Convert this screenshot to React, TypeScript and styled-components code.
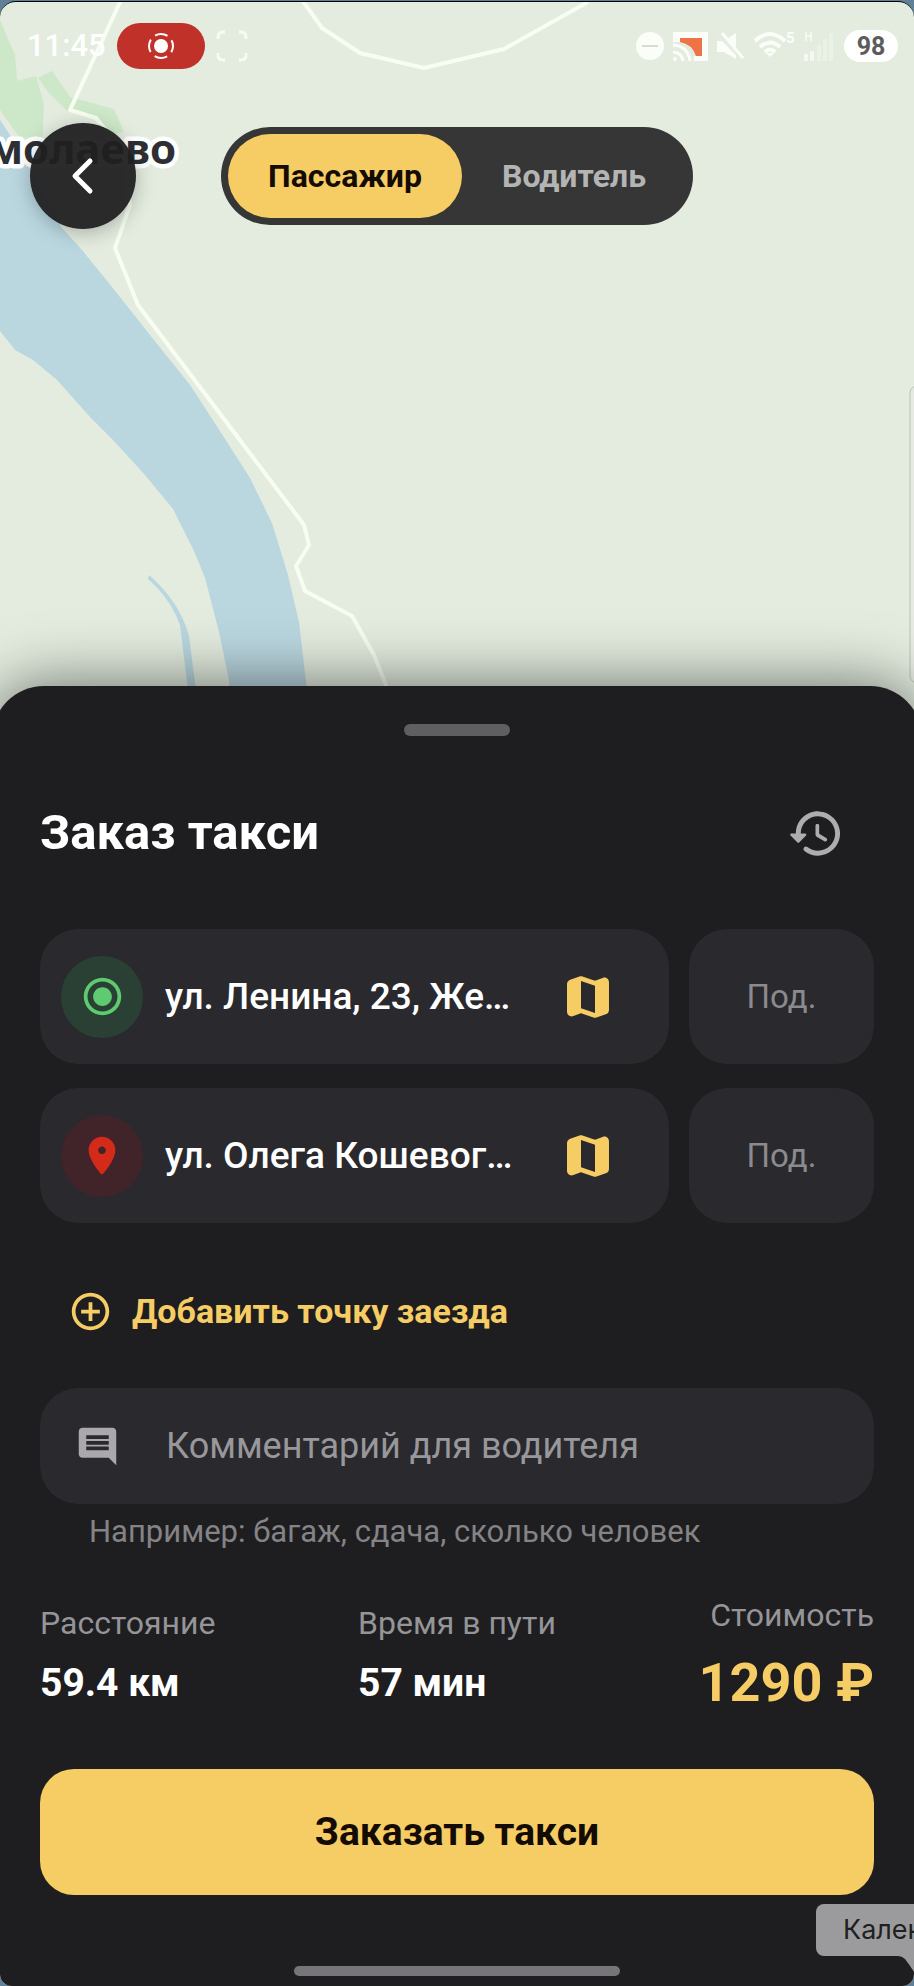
import React from "react";
import styled, { createGlobalStyle } from "styled-components";
import {
  MdAddCircleOutline,
  MdComment,
  MdRadioButtonChecked,
} from "react-icons/md";

const color = {
  sheet: "#1e1e20",
  card: "#2a292d",
  accent: "#f6cc65",
  text: "#ffffff",
  muted: "#959498",
  land: "#e3ecdf",
  water: "#bad7e0",
  wood: "#cde8c8",
  road: "#f8fdf1",
};

const GlobalStyle = createGlobalStyle`
  *, *::before, *::after { box-sizing: border-box; }
  body {
    margin: 0;
    background: #5f8096;
    font-family: Roboto, "Liberation Sans", sans-serif;
  }
  button, input { font: inherit; color: inherit; border: 0; background: none; padding: 0; margin: 0; }
  button { cursor: pointer; }
  h1, p, dl, dt, dd { margin: 0; font-weight: inherit; }
`;

const Page = styled.div`
  padding-top: 1px;
  overflow: hidden;
`;

const Screen = styled.main`
  position: relative;
  overflow: hidden;
  border-top: 1px solid #000;
  border-radius: 16px 16px 12px 12px;
  background: ${color.land};
`;

const MapArea = styled.section`
  position: relative;
  height: 684px;
`;

const MapDrawing = styled.svg`
  position: absolute;
  top: 0;
  left: 0;
  width: 100%;
  height: 740px;
  display: block;
`;

const StatusBar = styled.div`
  position: relative;
  display: flex;
  align-items: center;
  justify-content: space-between;
  height: 88px;
  padding: 0 16px 0 27px;
`;

const StatusGroup = styled.div<{ $gap: number }>`
  display: flex;
  align-items: center;
  gap: ${(p) => p.$gap}px;
`;

const Clock = styled.time`
  font-size: 31px;
  font-weight: 500;
  line-height: 40px;
  color: ${color.text};
`;

const RecordPill = styled.div`
  display: flex;
  align-items: center;
  justify-content: center;
  width: 88px;
  height: 46px;
  border-radius: 23px;
  background: #c0312a;
`;

const Battery = styled.div`
  display: flex;
  align-items: center;
  justify-content: center;
  width: 54px;
  height: 32px;
  border-radius: 16px;
  background: #fff;
  color: #5b5c5b;
  font-size: 25px;
  font-weight: 700;
`;

const TopControls = styled.header`
  position: relative;
  display: grid;
  grid-template-columns: 1fr auto 1fr;
  align-items: center;
  padding: 33px 30px 0;
`;

const BackButton = styled.button`
  display: flex;
  align-items: center;
  justify-content: center;
  width: 106px;
  height: 106px;
  border-radius: 50%;
  background: rgba(32, 32, 33, 0.95);
  box-shadow: 0 4px 20px rgba(0, 0, 0, 0.25);
`;

const ModeSwitch = styled.div`
  display: grid;
  grid-template-columns: 234px 224px;
  height: 98px;
  padding: 7px;
  border-radius: 50px;
  background: #363637;
`;

const ModeButton = styled.button<{ $active?: boolean }>`
  border-radius: 43px;
  font-size: 32px;
  font-weight: 700;
  color: ${(p) => (p.$active ? "#140c04" : "#b4b4b4")};
  background: ${(p) => (p.$active ? color.accent : "transparent")};
`;

const Sheet = styled.section`
  position: relative;
  margin: 0 -8px;
  padding: 38px 48px 10px;
  border-radius: 52px 52px 0 0;
  background: ${color.sheet};
  color: ${color.text};
  box-shadow: 0 0 64px rgba(0, 0, 0, 0.56);
`;

const Bar = styled.div<{ $width: number; $height: number; $tone: string }>`
  width: ${(p) => p.$width}px;
  height: ${(p) => p.$height}px;
  margin: 0 auto;
  border-radius: 6px;
  background: ${(p) => p.$tone};
`;

const TitleRow = styled.div`
  display: flex;
  align-items: center;
  justify-content: space-between;
  height: 60px;
  margin-top: 67px;
  padding-right: 29px;
`;

const Title = styled.h1`
  font-size: 49px;
  font-weight: 700;
  line-height: 60px;
`;

const IconButton = styled.button<{ $tone: string }>`
  display: flex;
  flex: none;
  color: ${(p) => p.$tone};
`;

const Stops = styled.div`
  display: flex;
  flex-direction: column;
  gap: 24px;
  margin-top: 66px;
`;

const StopRow = styled.div`
  display: flex;
  gap: 20px;
`;

const AddressCard = styled.div`
  display: flex;
  flex: 1;
  align-items: center;
  min-width: 0;
  height: 135px;
  padding: 0 53px 0 21px;
  border-radius: 38px;
  background: ${color.card};
`;

const StopBadge = styled.span<{ $tone: string; $fill: string }>`
  display: flex;
  flex: none;
  align-items: center;
  justify-content: center;
  width: 82px;
  height: 82px;
  border-radius: 50%;
  color: ${(p) => p.$tone};
  background: ${(p) => p.$fill};
`;

const AddressInput = styled.input`
  flex: 1;
  min-width: 0;
  height: 60px;
  margin: 0 20px 0 22px;
  font-size: 37px;
  font-weight: 500;
  text-overflow: ellipsis;
  outline: none;
`;

const EntranceInput = styled.input`
  width: 185px;
  height: 135px;
  border-radius: 38px;
  background: ${color.card};
  font-size: 33px;
  text-align: center;
  outline: none;
  &::placeholder { color: #8b8a8f; opacity: 1; }
`;

const AddStop = styled.button`
  display: flex;
  align-items: center;
  gap: 19px;
  height: 60px;
  margin-top: 58px;
  padding-left: 28px;
  font-size: 34px;
  font-weight: 700;
  color: ${color.accent};
`;

const CommentField = styled.label`
  display: flex;
  align-items: center;
  gap: 46px;
  height: 116px;
  margin-top: 47px;
  padding: 0 35px;
  border-radius: 38px;
  background: ${color.card};
  color: #aaa8ad;
`;

const CommentInput = styled.input`
  flex: 1;
  min-width: 0;
  height: 60px;
  font-size: 36px;
  outline: none;
  &::placeholder { color: #98979b; opacity: 1; }
`;

const Hint = styled.p`
  margin-top: 10px;
  padding-left: 49px;
  font-size: 31px;
  line-height: 36px;
  color: #848386;
`;

const Stats = styled.dl`
  display: flex;
  align-items: center;
  justify-content: space-between;
  margin-top: 47px;
`;

const Stat = styled.div<{ $end?: boolean }>`
  display: flex;
  flex-direction: column;
  gap: 20px;
  text-align: ${(p) => (p.$end ? "right" : "left")};
`;

const StatLabel = styled.dt`
  font-size: 32px;
  line-height: 36px;
  color: ${color.muted};
`;

const StatValue = styled.dd<{ $large?: boolean }>`
  font-size: ${(p) => (p.$large ? 54 : 39)}px;
  line-height: ${(p) => (p.$large ? 60 : 44)}px;
  font-weight: 700;
  color: ${(p) => (p.$large ? color.accent : color.text)};
`;

const OrderButton = styled.button`
  display: block;
  width: 100%;
  height: 126px;
  margin: 56px 0 71px;
  border-radius: 34px;
  background: ${color.accent};
  color: #140c04;
  font-size: 39px;
  font-weight: 700;
`;

const DockTip = styled.div`
  position: absolute;
  right: 0;
  bottom: 30px;
  width: 98px;
  height: 52px;
  padding-left: 27px;
  border-radius: 8px 0 0 8px;
  background: #9b9b9e;
  color: #1f1f21;
  font-family: Inter, "Liberation Sans", sans-serif;
  font-size: 27px;
  line-height: 52px;
  white-space: nowrap;
`;

const DockTipTail = styled.svg`
  position: absolute;
  top: 52px;
  right: 0;
`;

function MapBackground() {
  return (
    <MapDrawing viewBox="0 2 914 740" preserveAspectRatio="xMinYMin slice" aria-hidden="true">
      <g fill={color.wood}>
        <path d="M0 20 L15 55 L17 78 L28 138 L20 138 L0 110Z" />
        <path d="M17 81 L36 76 L44 104 L42 150 L28 146Z" />
        <path d="M38 78 L52 71 L70 97 L114 109 L124 132 L112 134 L96 119 L66 110 L48 92Z" />
      </g>
      <path
        fill={color.water}
        d="M0 120 L30 165 L62 228 L82 250 L112 287 L150 335 L190 385 L218 428 L250 478 L272 523 L288 575 L299 622 L307 690 L307 742 L231 742 L229 680 L219 632 L205 578 L194 551 L173 509 L145 475 L113 440 L90 417 L57 380 L33 360 L15 350 L0 331Z"
      />
      <path fill={color.water} d="M149 575 Q180 602 189 636 L196 690 L188 690 L180 625 Q170 598 148 579Z" />
      <g fill="none" stroke={color.road} strokeWidth="4" strokeLinejoin="round">
        <path d="M121 0 L70 110 L96 118 L122 150 L130 205 L115 248 L138 305 L304 525 L309 545 L296 566 L305 591 L352 616 L374 655 L388 690" />
        <path d="M302 0 L322 28 L360 53 L424 68 L504 49 L588 2" />
      </g>
      <text
        x="176"
        y="164"
        textAnchor="end"
        fontFamily='"Noto Sans", "Open Sans", sans-serif'
        fontSize="42"
        fontWeight="700"
        fill="#2d2f33"
        stroke="#ffffff"
        strokeWidth="9"
        strokeLinejoin="round"
        paintOrder="stroke"
      >
        молаево
      </text>
      <rect x="910" y="386" width="20" height="297" rx="7" fill="#e6eae2" stroke="#b9c2b6" strokeWidth="1" />
    </MapDrawing>
  );
}

function RecordIcon() {
  return (
    <svg width="28" height="28" viewBox="0 0 28 28" fill="none" aria-hidden="true">
      <circle cx="14" cy="14" r="7" fill="#fff" />
      <circle cx="14" cy="14" r="12" stroke="#fff" strokeWidth="2" strokeDasharray="13 5.85" strokeDashoffset="6.5" />
    </svg>
  );
}

function FrameIcon() {
  return (
    <svg width="32" height="32" viewBox="0 0 32 32" fill="none" stroke="#f7fbf3" strokeWidth="3" aria-hidden="true">
      <path d="M2 9 V7 Q2 2 7 2 H9 M23 2 H25 Q30 2 30 7 V9 M30 23 V25 Q30 30 25 30 H23 M9 30 H7 Q2 30 2 25 V23" />
    </svg>
  );
}

function SystemIcons() {
  return (
    <svg width="200" height="34" viewBox="634 29 200 34" fill="#fbfdf8" aria-label="Не беспокоить, трансляция, без звука, Wi-Fi, сеть">
      <circle cx="650" cy="46" r="14" />
      <rect x="642" y="45" width="16" height="2" fill="#d5ddd1" />
      <path d="M673 32 H708 V61 H694 V56 H702 V38 H680 V42 H673Z" />
      <path d="M680 38 H702 V56 H696 Q692 44 680 42Z" fill="#ee7347" />
      <g fill="none" stroke="#fbfdf8" strokeWidth="3">
        <path d="M673 45 Q688 46 690 61 M673 52 Q682 53 683 61" />
      </g>
      <circle cx="675" cy="59" r="2" />
      <path d="M717 41 H724 L736 33 V59 L724 52 H717Z" />
      <path d="M719 34 L743 59" stroke={color.land} strokeWidth="5" />
      <path d="M722 33 L743 58" stroke="#fbfdf8" strokeWidth="3" />
      <g fill="none" stroke="#fbfdf8" strokeWidth="4">
        <path d="M755 41 Q770 27 785 41 M760 47 Q770 38 780 47 M765 52 Q770 47 775 52" />
      </g>
      <path d="M770 57 L766 53 H774Z" />
      <text x="786" y="43" fontSize="15" fontWeight="700" fontFamily="Roboto, sans-serif">5</text>
      <g opacity="0.75">
        <path d="M805 32 h2 v3 h3 v-3 h2 v9 h-2 v-4 h-3 v4 h-2Z" />
        <rect x="804" y="54" width="4" height="7" />
        <rect x="810" y="51" width="4" height="10" />
      </g>
      <g opacity="0.3">
        <rect x="817" y="45" width="4" height="16" />
        <rect x="823" y="39" width="4" height="22" />
        <rect x="829" y="33" width="4" height="28" />
      </g>
    </svg>
  );
}

function HistoryIcon() {
  return (
    <svg width="59" height="59" viewBox="0 0 24 24" fill="currentColor" aria-hidden="true">
      <path d="M13.26 3C8.17 2.86 4 6.95 4 12H2.21c-.45 0-.67.54-.35.85l2.79 2.8c.2.2.51.2.71 0l2.79-2.8c.31-.31.09-.85-.36-.85H6c0-3.9 3.18-7.05 7.1-7 3.72.05 6.85 3.18 6.9 6.9.05 3.91-3.1 7.1-7 7.1-1.61 0-3.1-.55-4.28-1.48-.4-.31-.96-.28-1.32.08-.42.42-.39 1.13.08 1.49C9 20.29 10.91 21 13 21c5.05 0 9.14-4.17 9-9.26-.13-4.69-4.05-8.61-8.74-8.74zm-.51 5c-.41 0-.75.34-.75.75v3.68c0 .35.19.68.49.86l3.12 1.85c.36.21.82.09 1.03-.26.21-.36.09-.82-.26-1.03l-2.88-1.71v-3.4c0-.4-.34-.74-.75-.74z" />
    </svg>
  );
}

function MapIcon() {
  return (
    <svg width="56" height="56" viewBox="0 0 24 24" fill="currentColor" aria-hidden="true">
      <path d="M14.65 4.98l-5-1.75c-.42-.15-.88-.15-1.3-.01L4.36 4.56C3.55 4.84 3 5.6 3 6.46v11.85c0 1.41 1.41 2.37 2.72 1.86l2.93-1.14c.22-.09.47-.09.69-.01l5 1.75c.42.15.88.15 1.3.01l3.99-1.34c.81-.27 1.36-1.04 1.36-1.9V5.69c0-1.41-1.41-2.37-2.72-1.86l-2.93 1.14c-.22.08-.46.09-.69.01zM15 18.89l-6-2.11V5.11l6 2.11v11.67z" />
    </svg>
  );
}

function PinIcon() {
  return (
    <svg width="46" height="46" viewBox="0 0 24 24" fill="currentColor" aria-hidden="true">
      <path d="M12 2C8.13 2 5 5.13 5 9c0 4.17 4.42 9.92 6.24 12.11.4.48 1.13.48 1.53 0C14.58 18.92 19 13.17 19 9c0-3.87-3.13-7-7-7zm0 9c-1.1 0-2-.9-2-2s.9-2 2-2 2 .9 2 2-.9 2-2 2z" />
    </svg>
  );
}

const stops = [
  {
    id: "from",
    label: "Откуда",
    address: "ул. Ленина, 23, Же…",
    tone: "#5fcb70",
    fill: "#2a4034",
    icon: <MdRadioButtonChecked size={45} />,
  },
  {
    id: "to",
    label: "Куда",
    address: "ул. Олега Кошевог…",
    tone: "#d32a1a",
    fill: "#40242a",
    icon: <PinIcon />,
  },
];

export default function App() {
  return (
    <>
      <GlobalStyle />
      <Page>
        <Screen>
          <MapArea>
            <MapBackground />
            <StatusBar>
              <StatusGroup $gap={11}>
                <Clock>11:45</Clock>
                <RecordPill>
                  <RecordIcon />
                </RecordPill>
                <FrameIcon />
              </StatusGroup>
              <StatusGroup $gap={10}>
                <SystemIcons />
                <Battery>98</Battery>
              </StatusGroup>
            </StatusBar>
            <TopControls>
              <BackButton type="button" aria-label="Назад">
                <svg width="24" height="40" viewBox="0 0 24 40" fill="none" aria-hidden="true">
                  <path d="M19 5 L4 20 L19 35" stroke="#fff" strokeWidth="5" strokeLinecap="round" strokeLinejoin="round" />
                </svg>
              </BackButton>
              <ModeSwitch role="group" aria-label="Режим">
                <ModeButton type="button" $active aria-pressed="true">
                  Пассажир
                </ModeButton>
                <ModeButton type="button" aria-pressed="false">
                  Водитель
                </ModeButton>
              </ModeSwitch>
            </TopControls>
          </MapArea>

          <Sheet>
            <Bar $width={106} $height={12} $tone="#5f5f61" />
            <TitleRow>
              <Title>Заказ такси</Title>
              <IconButton type="button" $tone="#adadad" aria-label="История">
                <HistoryIcon />
              </IconButton>
            </TitleRow>

            <Stops>
              {stops.map((stop) => (
                <StopRow key={stop.id}>
                  <AddressCard>
                    <StopBadge $tone={stop.tone} $fill={stop.fill}>
                      {stop.icon}
                    </StopBadge>
                    <AddressInput type="text" aria-label={stop.label} defaultValue={stop.address} />
                    <IconButton type="button" $tone={color.accent} aria-label="Выбрать на карте">
                      <MapIcon />
                    </IconButton>
                  </AddressCard>
                  <EntranceInput type="text" aria-label="Подъезд" placeholder="Под." />
                </StopRow>
              ))}
            </Stops>

            <AddStop type="button">
              <MdAddCircleOutline size={45} />
              Добавить точку заезда
            </AddStop>

            <CommentField>
              <MdComment size={45} />
              <CommentInput
                type="text"
                aria-label="Комментарий для водителя"
                placeholder="Комментарий для водителя"
              />
            </CommentField>
            <Hint>Например: багаж, сдача, сколько человек</Hint>

            <Stats>
              <Stat>
                <StatLabel>Расстояние</StatLabel>
                <StatValue>59.4 км</StatValue>
              </Stat>
              <Stat>
                <StatLabel>Время в пути</StatLabel>
                <StatValue>57 мин</StatValue>
              </Stat>
              <Stat $end>
                <StatLabel>Стоимость</StatLabel>
                <StatValue $large>1290 ₽</StatValue>
              </Stat>
            </Stats>

            <OrderButton type="button">Заказать такси</OrderButton>
            <Bar $width={326} $height={10} $tone="#77757a" />
          </Sheet>

          <DockTip>
            Кален
            <DockTipTail width="16" height="16" viewBox="0 0 16 16" aria-hidden="true">
              <path d="M0 0 H16 V16 Q11 8 7 3 Q4 0 0 0Z" fill="#9b9b9e" />
            </DockTipTail>
          </DockTip>
        </Screen>
      </Page>
    </>
  );
}
